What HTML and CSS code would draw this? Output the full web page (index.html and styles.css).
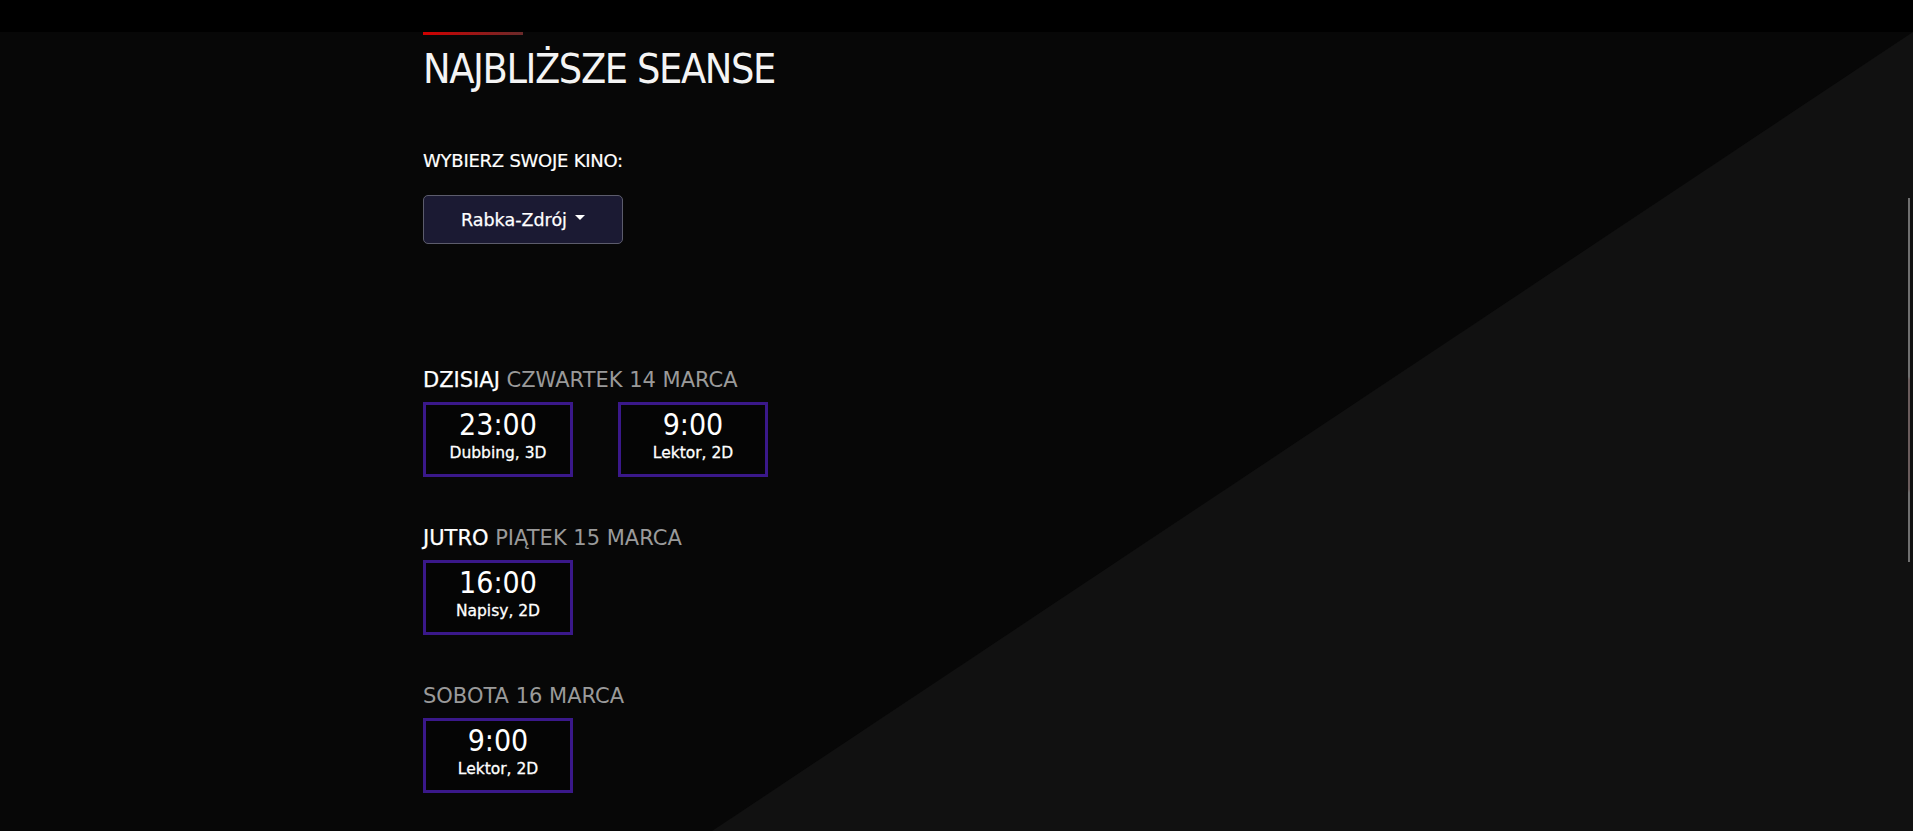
FILE: index.html
```html
<!DOCTYPE html>
<html lang="pl">
<head>
<meta charset="utf-8">
<title>Najbliższe seanse</title>
<link rel="stylesheet" href="styles.css">
</head>
<body>
<div class="topbar"></div>
<main class="stage">
  <div class="scroll-line"></div>
  <section class="container">
    <div class="accent"></div>
    <h1 class="title">NAJBLIŻSZE SEANSE</h1>
    <p class="pick">WYBIERZ SWOJE KINO:</p>
    <button class="cinema" type="button">Rabka-Zdrój<span class="caret"></span></button>

    <div class="days">
      <div class="day">
        <h2 class="day-title"><span class="rel">DZISIAJ</span> <span class="date">CZWARTEK 14 MARCA</span></h2>
        <div class="shows">
          <a class="show"><span class="time">23:00</span><span class="kind">Dubbing, 3D</span></a>
          <a class="show"><span class="time">9:00</span><span class="kind">Lektor, 2D</span></a>
        </div>
      </div>
      <div class="day">
        <h2 class="day-title"><span class="rel">JUTRO</span> <span class="date">PIĄTEK 15 MARCA</span></h2>
        <div class="shows">
          <a class="show"><span class="time">16:00</span><span class="kind">Napisy, 2D</span></a>
        </div>
      </div>
      <div class="day">
        <h2 class="day-title"><span class="date">SOBOTA 16 MARCA</span></h2>
        <div class="shows">
          <a class="show"><span class="time">9:00</span><span class="kind">Lektor, 2D</span></a>
        </div>
      </div>
    </div>
  </section>
</main>
</body>
</html>
```
FILE: styles.css
```css
* { box-sizing: border-box; }
html, body { margin: 0; padding: 0; }
body {
  background: #000;
  color: #fff;
  font-family: "DejaVu Sans", "Noto Sans", sans-serif;
  overflow: hidden;
}
.topbar { height: 32px; background: #000; }
.stage {
  position: relative;
  min-height: 799px;
  background: #070707;
  overflow: hidden;
}
.stage::before {
  content: "";
  position: absolute;
  inset: 0;
  background: #111111;
  clip-path: polygon(100% 0, 100% 100%, 712px 100%);
}
.scroll-line {
  position: absolute;
  left: 1908px;
  top: 166px;
  width: 2px;
  height: 364px;
  background: linear-gradient(180deg, #707070 0%, #707070 49%, #6a5c5c 50%, #6a5c5c 80%, #707070 81%);
  z-index: 1;
}
.container {
  position: relative;
  z-index: 1;
  width: 1067px;
  margin: 0 auto;
}
.accent {
  width: 100px;
  height: 3px;
  background: linear-gradient(90deg, #d00000, #6a2a2a);
}
.title {
  margin: 10px 0 0;
  font-size: 41px;
  line-height: 48px;
  font-weight: normal;
  font-stretch: condensed;
  letter-spacing: -1.4px;
  color: #f4f4f4;
}
.pick {
  margin: 57px 0 0;
  font-size: 18px;
  line-height: 22px;
  letter-spacing: -0.25px;
  -webkit-text-stroke: 0.2px #fff;
}
.cinema {
  margin-top: 23px;
  width: 200px;
  height: 49px;
  background: #1b1a33;
  border: 1px solid #5c5c6c;
  border-radius: 5px;
  color: #fff;
  font-family: inherit;
  font-size: 17.5px;
  -webkit-text-stroke: 0.25px #fff;
  display: flex;
  align-items: center;
  justify-content: center;
  gap: 8px;
  padding: 0;
}
.caret {
  width: 0; height: 0;
  border-left: 5px solid transparent;
  border-right: 5px solid transparent;
  border-top: 5px solid #fff;
  margin-top: -4px;
}
.days {
  margin-top: 124px;
  display: flex;
  flex-direction: column;
  gap: 49px;
}
.day-title {
  margin: 0 0 10px;
  font-size: 21px;
  line-height: 24px;
  font-weight: normal;
}
.rel { color: #fff; -webkit-text-stroke: 0.25px #fff; }
.date { color: #9a9a9a; }
.shows { display: flex; gap: 45px; }
.show {
  width: 150px;
  height: 75px;
  border: 3px solid #3a188a;
  background: #050505;
  display: flex;
  flex-direction: column;
  align-items: center;
  padding-top: 2px;
}
.time { font-size: 30px; line-height: 36px; font-stretch: condensed; }
.kind { font-size: 15.5px; line-height: 21px; -webkit-text-stroke: 0.3px #fff; }
```
